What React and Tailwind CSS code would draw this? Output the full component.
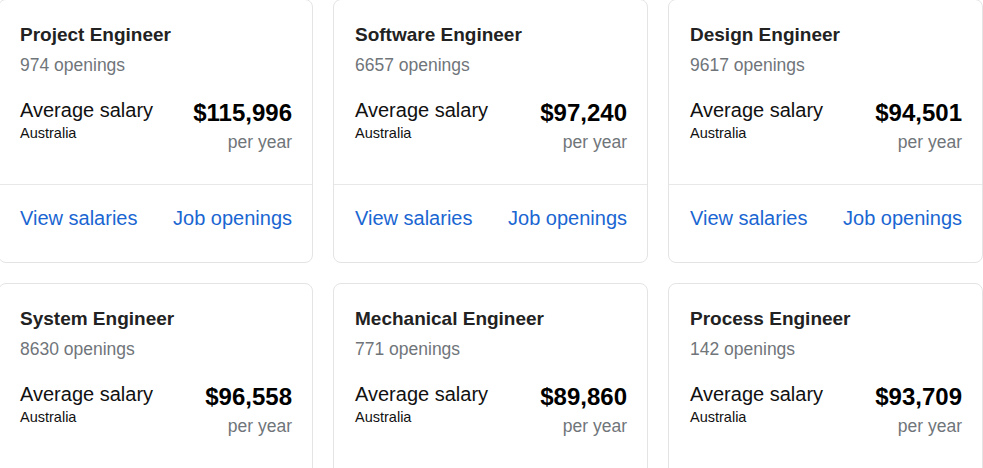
import React from "react";

const jobs = [
  { title: "Project Engineer", openings: "974 openings", salary: "$115,996" },
  { title: "Software Engineer", openings: "6657 openings", salary: "$97,240" },
  { title: "Design Engineer", openings: "9617 openings", salary: "$94,501" },
  { title: "System Engineer", openings: "8630 openings", salary: "$96,558" },
  { title: "Mechanical Engineer", openings: "771 openings", salary: "$89,860" },
  { title: "Process Engineer", openings: "142 openings", salary: "$93,709" },
];

function Card({ job }) {
  return (
    <div className="box-border h-[264px] w-[315px] rounded-[8px] border border-[#e4e4e4] bg-white flex flex-col">
      <div className="box-border h-[185px] border-b border-[#e8e8e8] pl-[21px] pr-[20px] pt-[23px]">
        <div className="h-[24px] text-[19px] leading-[24px] font-bold text-[#222222]">{job.title}</div>
        <div className="mt-[6px] h-[24px] text-[17.5px] leading-[24px] text-[#70757a]">{job.openings}</div>
        <div className="mt-[21px] flex justify-between">
          <div>
            <div className="h-[24px] text-[20px] leading-[24px] text-[#111111]">Average salary</div>
            <div className="mt-[2px] text-[14.5px] leading-[18px] text-[#111111]">Australia</div>
          </div>
          <div className="text-right">
            <div className="h-[30px] text-[24px] leading-[30px] font-bold text-black">{job.salary}</div>
            <div className="mt-[2px] text-[17.5px] leading-[24px] text-[#70757a]">per year</div>
          </div>
        </div>
      </div>
      <div className="flex justify-between pl-[21px] pr-[20px] pt-[21px] text-[20px] leading-[24px] text-[#1a66d2]">
        <span>View salaries</span>
        <span>Job openings</span>
      </div>
    </div>
  );
}

export default function App() {
  return (
    <div className="h-[468px] w-[983px] overflow-hidden bg-white" style={{ fontFamily: '"Liberation Sans", Arial, sans-serif' }}>
      <div className="-ml-[2px] -mt-[1px] grid grid-cols-[315px_315px_315px] gap-x-[20px] gap-y-[20px]">
        {jobs.map((j) => (
          <Card key={j.title} job={j} />
        ))}
      </div>
    </div>
  );
}
